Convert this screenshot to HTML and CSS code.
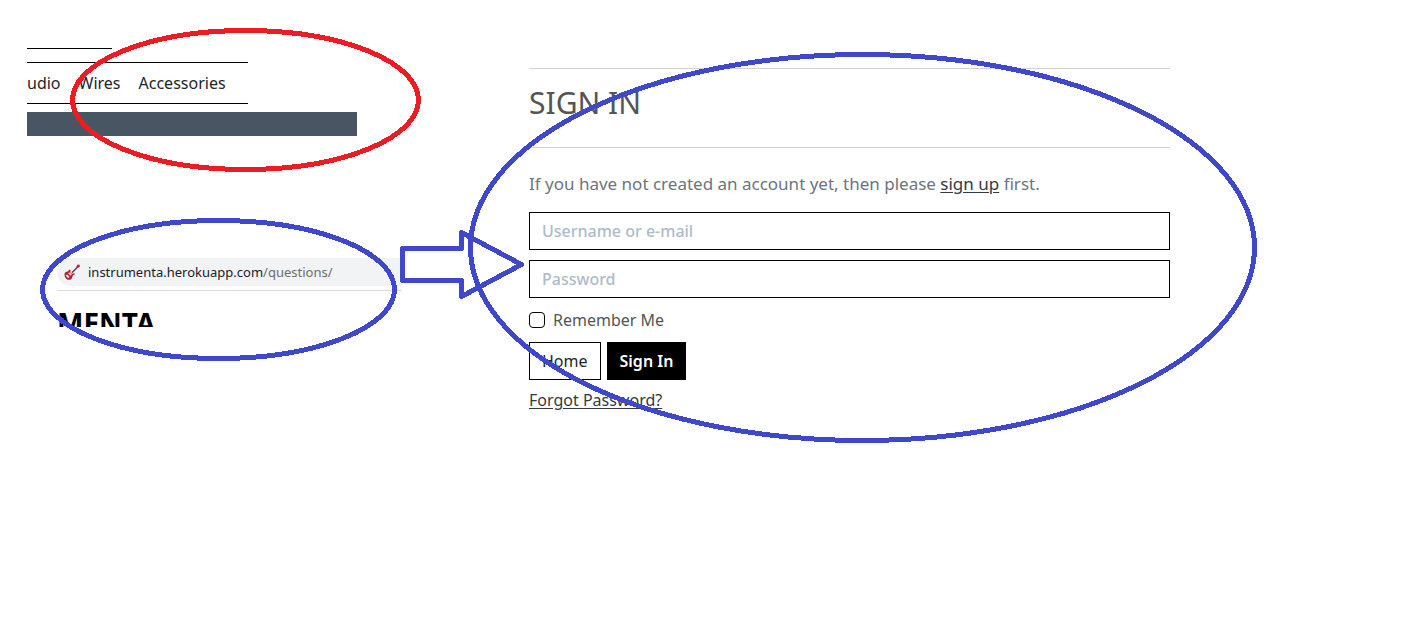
FILE: index.html
```html
<!DOCTYPE html>
<html lang="en">
<head>
<meta charset="utf-8">
<title>Instrumenta – Sign in</title>
<link rel="stylesheet" href="styles.css">
</head>
<body>
<main class="board">
  <div class="snips">
    <section class="menu-snip">
      <div class="menu-edge"></div>
      <nav class="menu">
        <a href="#">udio</a>
        <a href="#">Wires</a>
        <a href="#">Accessories</a>
      </nav>
      <div class="band"></div>
    </section>
    <section class="browser-snip">
      <div class="address">
        <svg class="guitar" viewBox="0 0 16 16" aria-hidden="true">
          <path d="M8 8.600L14 2.600" stroke="#6b4650" stroke-width="1.500"/>
          <path d="M12.300 2.800L13.600.400l2 .4.300 1.900-2.300 1.400z" fill="#c8243f"/>
          <path d="M.500 10.200C.500 8.400 2.400 8 3.500 7.600 4.600 7.100 4.500 5.500 6.100 5.400l.5 1.500-.4 1.300 1.800 1.600 2.800-.5c.2 1.500-1.600 1.600-2.100 2.500-.7 1.200-.4 3.700-3.200 4C2.700 16 .500 13.400.500 10.200z" fill="#be1931"/>
          <path d="M5.500 8.200l2.300 2.200-1.200 1.400-2.400-2.200z" fill="#f3dfe2"/>
          <path d="M2.300 11l2.600 2.600" stroke="#e4e6e8" stroke-width="1.800"/>
        </svg>
        <span class="url">instrumenta.herokuapp.com<span class="path">/questions/</span></span>
      </div>
      <div class="brand">MENTA</div>
    </section>
  </div>

  <section class="signin">
    <h1>SIGN IN</h1>
    <p class="hint">If you have not created an account yet, then please <a href="#">sign up</a> first.</p>
    <form class="form">
      <input class="field" type="text" placeholder="Username or e-mail" aria-label="Username or e-mail">
      <input class="field" type="password" placeholder="Password" aria-label="Password">
      <label class="remember"><input type="checkbox"> Remember Me</label>
      <div class="actions">
        <button class="btn" type="button">Home</button>
        <button class="btn primary" type="submit">Sign In</button>
      </div>
      <a class="forgot" href="#">Forgot Password?</a>
    </form>
  </section>

  <svg class="marks" width="1300" height="480" viewBox="0 0 1300 480" fill="none" stroke-width="5" aria-hidden="true" shape-rendering="crispEdges">
    <ellipse cx="245.500" cy="100" rx="173" ry="69.500" stroke="#ed1c24"/>
    <g stroke="#3f48cc" stroke-linejoin="round">
      <ellipse cx="218.500" cy="289.500" rx="176" ry="69"/>
      <ellipse cx="862.500" cy="247.500" rx="392" ry="193"/>
      <path d="M402.500 248.500h59v-16l60 32-60 32v-16h-59z"/>
    </g>
  </svg>
</main>
</body>
</html>
```
FILE: styles.css
```css
* { box-sizing: border-box; }

body {
  margin: 0;
  background: #fff;
  color: #555;
  font: 16px/24px "Noto Sans", sans-serif;
}

.board {
  position: relative;
  display: grid;
  grid-template-columns: 502px minmax(0, 641px);
  min-height: 480px;
  padding: 48px 24px 0 27px;
}

.menu-snip { width: 330px; }
.menu-edge { width: 85px; border-top: 1px solid #000; }

.menu {
  display: flex;
  gap: 18px;
  width: 221px;
  margin: 13px 0 8px;
  padding: 8px 0;
  border: solid #000;
  border-width: 1px 0;
}
.menu a { color: #212529; text-decoration: none; }

.band { height: 24px; background: #485563; }

.browser-snip { width: 345px; margin: 122px 0 0 30px; }

.address {
  display: flex;
  align-items: center;
  gap: 8px;
  height: 28px;
  padding-left: 7px;
  border-radius: 14px 0 0 14px;
  background: #f1f3f4;
}
.guitar { width: 16px; height: 16px; }
.url { color: #202124; font-size: 13px; }
.path { color: #6b6e72; }

.brand {
  height: 37px;
  margin-top: 4px;
  padding-top: 20px;
  overflow: hidden;
  border-top: 1px solid #dadada;
  color: #000;
  font-size: 28px;
  font-weight: 700;
  line-height: 24px;
}

.signin { margin-top: 20px; }
.signin h1 {
  margin: 0;
  padding: 14px 0 24px;
  border: solid #d2d2d2;
  border-width: 1px 0;
  font-size: 30px;
  font-weight: 400;
  line-height: 40px;
}
.hint { margin: 24px 0 16px; color: #6c757d; font-size: 17px; }
.hint a, .forgot { color: #343a40; text-underline-offset: 2px; }

.form { display: flex; flex-direction: column; align-items: flex-start; }

.field {
  width: 100%;
  height: 38px;
  margin-bottom: 10px;
  padding: 0 12px;
  border: 1px solid #000;
  border-radius: 0;
  background: #fff;
  font: 500 16px/24px "Noto Sans", sans-serif;
}
.field::placeholder { color: #aebbc9; opacity: 1; }

.remember { display: flex; align-items: center; gap: 8px; }
.remember input {
  appearance: none;
  width: 16px;
  height: 16px;
  margin: 0;
  border: 1px solid #000;
  border-radius: 4px;
  background: #fff;
}
.remember input:checked { background: #000; }

.actions { display: flex; gap: 6px; margin: 10px 0 8px; }
.btn {
  height: 38px;
  padding: 0 12px;
  border: 1px solid #000;
  background: #fff;
  color: #212529;
  font: 16px/24px "Noto Sans", sans-serif;
}
.btn.primary { background: #000; color: #fff; font-weight: 600; }

.marks { position: absolute; top: 0; left: 0; pointer-events: none; }
```
